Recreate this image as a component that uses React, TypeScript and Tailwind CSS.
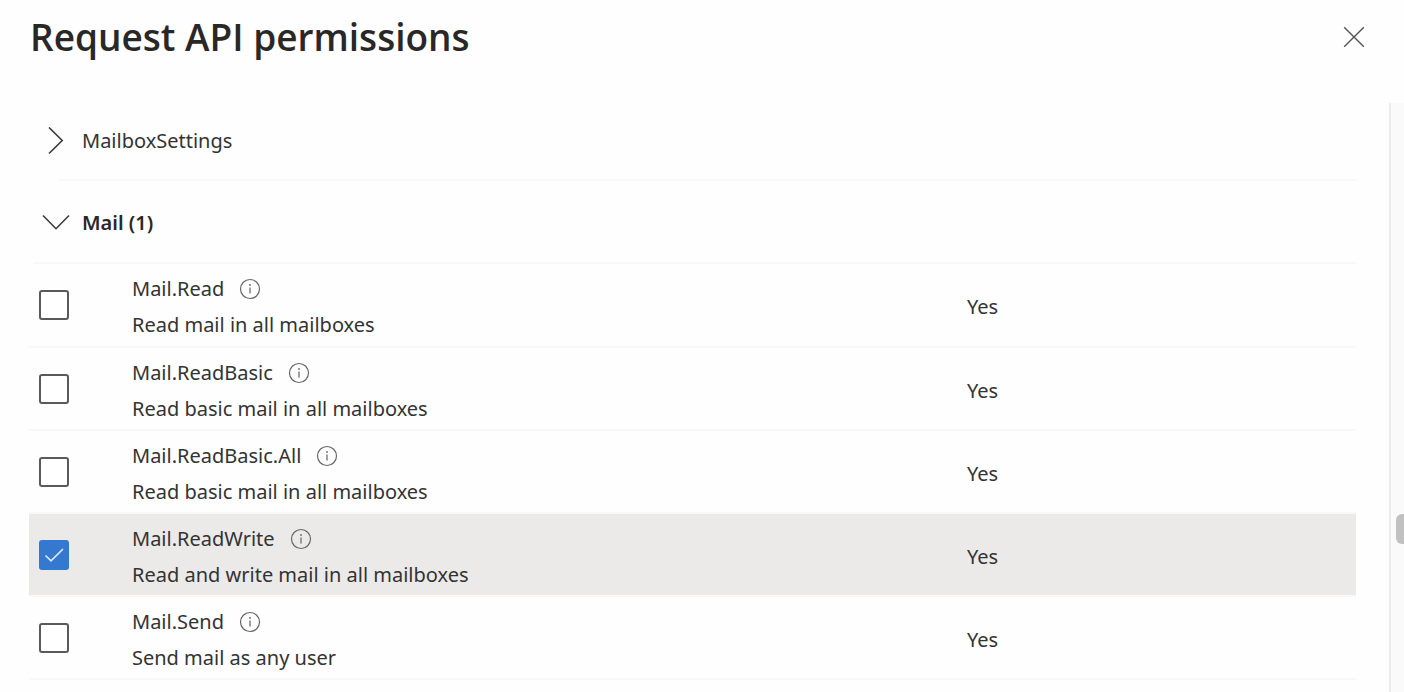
import { useState } from "react";

type Permission = { name: string; description: string; consent: string };

const permissions: Permission[] = [
  { name: "Mail.Read", description: "Read mail in all mailboxes", consent: "Yes" },
  { name: "Mail.ReadBasic", description: "Read basic mail in all mailboxes", consent: "Yes" },
  { name: "Mail.ReadBasic.All", description: "Read basic mail in all mailboxes", consent: "Yes" },
  { name: "Mail.ReadWrite", description: "Read and write mail in all mailboxes", consent: "Yes" },
  { name: "Mail.Send", description: "Send mail as any user", consent: "Yes" },
];

function CloseIcon() {
  return (
    <svg width="22" height="22" viewBox="0 0 22 22" fill="none" stroke="#555" strokeWidth="1.4" aria-hidden="true">
      <path d="M1.2 1.2 20.8 20.8M20.8 1.2 1.2 20.8" />
    </svg>
  );
}

function Chevron({ open }: { open: boolean }) {
  return (
    <svg width="28" height="28" viewBox="0 0 28 28" fill="none" stroke="#3a3a3a" strokeWidth="1.6" aria-hidden="true">
      <path d={open ? "M1 6.5 14 19.7 27 6.5" : "M7 0.5 20.2 13.5 7 26.5"} />
    </svg>
  );
}

function InfoIcon() {
  return (
    <svg width="22" height="22" viewBox="0 0 22 22" fill="none" aria-hidden="true">
      <circle cx="11" cy="11" r="9.5" stroke="#666" strokeWidth="1.2" />
      <path d="M11 9.5V15.5" stroke="#777" strokeWidth="1.4" />
      <circle cx="11" cy="7" r="1" fill="#777" />
    </svg>
  );
}

function Tick() {
  return (
    <svg
      className="pointer-events-none absolute inset-0"
      width="30"
      height="30"
      viewBox="0 0 30 30"
      fill="none"
      stroke="#dcebfb"
      strokeWidth="1.6"
      aria-hidden="true"
    >
      <path d="M6.5 15.5 12 20.8 24 9" />
    </svg>
  );
}

export default function App() {
  const [selected, setSelected] = useState<string[]>(["Mail.ReadWrite"]);

  const toggle = (name: string) =>
    setSelected((current) =>
      current.includes(name) ? current.filter((item) => item !== name) : [...current, name],
    );

  return (
    <main className="flex h-screen flex-col overflow-hidden bg-[#fefefe] font-['Noto_Sans','Open_Sans',sans-serif] text-[20px] text-[#333]">
      <header className="flex h-[103px] shrink-0 items-start justify-between pt-[12px] pr-[39px] pl-[30px]">
        <h1 className="font-['Open_Sans','Noto_Sans',sans-serif] text-[37px] leading-[50px] font-semibold text-[#292827]">
          Request API permissions
        </h1>
        <button type="button" aria-label="Close" className="flex h-[50px] items-center">
          <CloseIcon />
        </button>
      </header>

      <div className="flex min-h-0 flex-1">
        <div className="min-w-0 flex-1 overflow-hidden pr-[33px] pl-[29px]">
          <button type="button" aria-expanded="false" className="flex h-[76px] w-full items-center gap-[12px] pl-[13px]">
            <Chevron open={false} />
            <span>MailboxSettings</span>
          </button>
          <div className="ml-[30px] h-[2px] bg-[#f8f8f8]" />
          <button
            type="button"
            aria-expanded="true"
            className="flex h-[81px] w-full items-center gap-[12px] pt-[3px] pl-[13px] font-semibold text-[#292827]"
          >
            <Chevron open />
            <span>Mail ({selected.length})</span>
          </button>
          <div className="ml-[4px] h-[2px] bg-[#f8f8f8]" />

          <table className="w-full table-fixed border-collapse text-left">
            <colgroup>
              <col className="w-[103px]" />
              <col />
              <col className="w-[389px]" />
            </colgroup>
            <tbody>
              {permissions.map((permission) => {
                const checked = selected.includes(permission.name);
                return (
                  <tr
                    key={permission.name}
                    className={
                      checked
                        ? "h-[83px] border-b-2 border-[#f8f8f8] bg-[#ebeae9]"
                        : "h-[83px] border-b-2 border-[#f8f8f8]"
                    }
                  >
                    <td className="pl-[10px]">
                      <span className="relative block size-[30px]">
                        <input
                          id={permission.name}
                          type="checkbox"
                          checked={checked}
                          onChange={() => toggle(permission.name)}
                          className="block size-[30px] appearance-none rounded-[3px] border-2 border-[#5a5a5a] bg-white checked:border-[#3478cf] checked:bg-[#3478cf]"
                        />
                        {checked && <Tick />}
                      </span>
                    </td>
                    <td className="pt-[4px]">
                      <div className="flex h-[36px] items-center gap-[15px]">
                        <label htmlFor={permission.name}>{permission.name}</label>
                        <button type="button" aria-label={`About ${permission.name}`}>
                          <InfoIcon />
                        </button>
                      </div>
                      <p className="leading-[36px]">{permission.description}</p>
                    </td>
                    <td className="pt-[4px]">{permission.consent}</td>
                  </tr>
                );
              })}
            </tbody>
          </table>
        </div>

        <div className="flex w-[15px] shrink-0 justify-end overflow-hidden border-l-2 border-[#ececec] bg-[#fafafa] pt-[411px]">
          <div className="h-[30px] w-[8px] rounded-l-[6px] bg-[#c1c1c1]" />
        </div>
      </div>
    </main>
  );
}
